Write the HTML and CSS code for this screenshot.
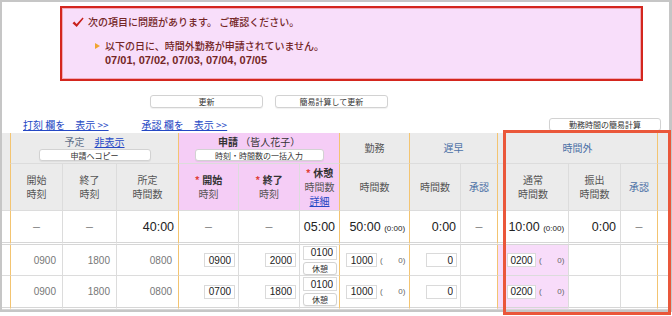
FILE: index.html
```html
<!DOCTYPE html>
<html lang="ja">
<head>
    <meta charset="UTF-8">
    <title>勤務表</title>
    <link rel="stylesheet" href="styles.css">
</head>
<body>
    <div class="frame">
        <div class="alert">
            <p class="alert-title">
                <svg class="check" width="12" height="11" viewBox="0 0 12 11"><path d="M0.5 6.2 L2.3 4.6 L4.6 6.9 L10.6 0.6 L11.6 1.6 L4.7 10 Z" fill="#c8201c"/></svg>
                次の項目に問題があります。 ご確認ください。
            </p>
            <div class="alert-item">
                <span class="tri"></span>
                <p>以下の日に、時間外勤務が申請されていません。<br><span class="dates">07/01, 07/02, 07/03, 07/04, 07/05</span></p>
            </div>
        </div>

        <div class="actions">
            <button class="btn">更新</button>
            <button class="btn">簡易計算して更新</button>
        </div>

        <div class="toolbar">
            <a href="#" class="toggle">打刻 欄を　表示 &gt;&gt;</a>
            <a href="#" class="toggle">承認 欄を　表示 &gt;&gt;</a>
            <button class="btn calc">勤務時間の簡易計算</button>
        </div>

        <table class="sheet">
            <colgroup>
                <col class="w-edge">
                <col class="w-52"><col class="w-54"><col class="w-62">
                <col class="w-60"><col class="w-61"><col class="w-40">
                <col class="w-70">
                <col class="w-51"><col class="w-37">
                <col class="w-71"><col class="w-52"><col class="w-37">
                <col class="w-rest">
            </colgroup>
            <tr class="head-top">
                <th rowspan="2" class="edge"></th>
                <th colspan="3" class="g-start grp">
                    <div class="grp-title"><span class="plan">予定</span>　<a href="#" class="link">非表示</a></div>
                    <button class="btn mini copy">申請へコピー</button>
                </th>
                <th colspan="3" class="g-start grp apply">
                    <div class="grp-title"><b>申請</b> （皆人花子）</div>
                    <button class="btn mini bulk">時刻・時間数の一括入力</button>
                </th>
                <th class="g-start">勤務</th>
                <th colspan="2" class="g-start blue">遅早</th>
                <th colspan="3" class="g-start blue">時間外</th>
                <th class="g-start"></th>
            </tr>
            <tr class="head-sub">
                <th class="g-start">開始<br>時刻</th>
                <th>終了<br>時刻</th>
                <th>所定<br>時間数</th>
                <th class="g-start apply"><b><span class="req">*</span> 開始</b><br>時刻</th>
                <th class="apply"><b><span class="req">*</span> 終了</b><br>時刻</th>
                <th class="apply"><b><span class="req">*</span> 休憩</b><br>時間数<br><a href="#" class="link">詳細</a></th>
                <th class="g-start">時間数</th>
                <th class="g-start">時間数</th>
                <th class="blue">承認</th>
                <th class="g-start">通常<br>時間数</th>
                <th>振出<br>時間数</th>
                <th class="blue">承認</th>
                <th class="g-start"></th>
            </tr>
            <tr class="sum">
                <td class="edge"></td>
                <td class="g-start dash">–</td>
                <td class="dash">–</td>
                <td class="num">40:00</td>
                <td class="g-start dash">–</td>
                <td class="dash">–</td>
                <td class="num">05:00</td>
                <td class="g-start num">50:00 <small>(0:00)</small></td>
                <td class="g-start num">0:00</td>
                <td class="dash">–</td>
                <td class="g-start num">10:00 <small>(0:00)</small></td>
                <td class="num">0:00</td>
                <td class="dash">–</td>
                <td class="g-start"></td>
            </tr>
            <tr class="day">
                <td class="edge"></td>
                <td class="g-start plain">0900</td>
                <td class="plain">1800</td>
                <td class="plain">0800</td>
                <td class="g-start field-cell"><input class="field" value="0900"></td>
                <td class="field-cell"><input class="field" value="2000"></td>
                <td class="rest-cell"><input class="field rest" value="0100"><button class="btn rest-btn">休憩</button></td>
                <td class="g-start work-cell"><input class="field" value="1000"><span class="paren">(<span class="pv">0</span>)</span></td>
                <td class="g-start field-cell"><input class="field" value="0"></td>
                <td></td>
                <td class="g-start pink work-cell"><input class="field short" value="0200"><span class="paren">(<span class="pv">0</span>)</span></td>
                <td></td>
                <td></td>
                <td class="g-start"></td>
            </tr>
            <tr class="day last">
                <td class="edge"></td>
                <td class="g-start plain">0900</td>
                <td class="plain">1800</td>
                <td class="plain">0800</td>
                <td class="g-start field-cell"><input class="field" value="0700"></td>
                <td class="field-cell"><input class="field" value="1800"></td>
                <td class="rest-cell"><input class="field rest" value="0100"><button class="btn rest-btn">休憩</button></td>
                <td class="g-start work-cell"><input class="field" value="1000"><span class="paren">(<span class="pv">0</span>)</span></td>
                <td class="g-start field-cell"><input class="field" value="0"></td>
                <td></td>
                <td class="g-start pink work-cell"><input class="field short" value="0200"><span class="paren">(<span class="pv">0</span>)</span></td>
                <td></td>
                <td></td>
                <td class="g-start"></td>
            </tr>
            <tr class="day">
                <td class="edge"></td>
                <td class="g-start"></td><td></td><td></td>
                <td class="g-start"></td><td></td><td></td>
                <td class="g-start"></td>
                <td class="g-start"></td><td></td>
                <td class="g-start pink"></td><td></td><td></td>
                <td class="g-start"></td>
            </tr>
        </table>
    </div>

    <div class="highlight"></div>
</body>
</html>
```

FILE: styles.css
```css
* {
    margin: 0;
    padding: 0;
    box-sizing: border-box;
}

body {
    position: relative;
    width: 672px;
    height: 316px;
    overflow: hidden;
    font-family: "Noto Sans CJK JP", "Liberation Sans", sans-serif;
    font-size: 10px;
    color: #444;
    background-color: #fff;
}

.frame {
    height: 312px;
    border: 2px solid #c6c6c6;
    border-right-width: 3px;
    overflow: hidden;
}

/* error message */
.alert {
    width: 583px;
    height: 75px;
    margin: 4px 0 0 58px;
    padding: 7px 0 0 10px;
    background-color: #f8defa;
    border: 2px solid #d4261e;
    box-shadow: inset 0 0 0 1px #f0aab8;
    color: #742626;
    font-weight: 500;
    line-height: 14px;
}

.alert-title {
    display: flex;
    align-items: center;
    gap: 4px;
}

.alert-item {
    display: flex;
    align-items: flex-start;
    margin: 10px 0 0 23px;
}

.tri {
    width: 0;
    height: 0;
    margin: 4px 5px 0 0;
    border-left: 5px solid #f0a431;
    border-top: 3px solid transparent;
    border-bottom: 3px solid transparent;
}

.dates {
    font-family: "Liberation Sans", sans-serif;
    font-size: 11px;
    font-weight: bold;
}

/* buttons */
.btn {
    height: 13px;
    background-color: #fff;
    border: 1px solid #d2d2d2;
    border-radius: 3px;
    box-shadow: 0 1px 1px rgba(0, 0, 0, 0.06);
    font-family: "Noto Sans CJK JP", sans-serif;
    font-size: 8px;
    line-height: 11px;
    color: #333;
}

.actions {
    display: flex;
    gap: 12px;
    margin: 14px 0 0 148px;
}

.actions .btn {
    width: 113px;
}

.toolbar {
    display: flex;
    align-items: flex-end;
    height: 25px;
    padding-left: 21px;
}

.toggle {
    margin-right: 33px;
    padding-bottom: 1px;
    line-height: 14px;
    color: #2548c4;
}

.calc {
    width: 112px;
    margin: 0 8px 2px auto;
}

/* time sheet */
.sheet {
    width: 675px;
    table-layout: fixed;
    border-collapse: separate;
    border-spacing: 0;
}

.w-edge { width: 8px; }
.w-37 { width: 37px; }
.w-40 { width: 40px; }
.w-51 { width: 51px; }
.w-52 { width: 52px; }
.w-54 { width: 54px; }
.w-60 { width: 60px; }
.w-61 { width: 61px; }
.w-62 { width: 62px; }
.w-70 { width: 70px; }
.w-71 { width: 71px; }
.w-rest { width: 20px; }

.sheet th,
.sheet td {
    border-left: 1px solid #dcdcdc;
    border-bottom: 1px solid #dcdcdc;
    padding: 0;
    overflow: hidden;
    white-space: nowrap;
}

.sheet th {
    background-color: #ebebeb;
    font-weight: normal;
    color: #555;
    line-height: 14px;
}

.sheet .edge {
    border-left: none;
}

.sheet .g-start {
    border-left-color: #f3c471;
}

.sheet .apply {
    background-color: #f5cdf6;
}

.blue {
    color: #4c70a6 !important;
}

.head-top th {
    height: 31px;
}

.head-top .grp {
    vertical-align: top;
    padding-top: 2px;
}

.grp-title {
    color: #333;
}

.plan {
    color: #5f7089;
}

.link {
    color: #2548c4;
}

.mini {
    display: block;
    height: 12px;
    margin: 0 auto;
}

.copy { width: 112px; }
.bulk { width: 129px; }

.head-sub th {
    height: 47px;
}

.head-sub b {
    color: #333;
}

.req {
    color: #e0403a;
}

.sheet td {
    height: 31px;
    font-family: "Liberation Sans", sans-serif;
}

.sum td {
    border-bottom: 3px double #d6d6d6;
    height: 34px;
    color: #222;
    font-size: 12.5px;
}

.sum .dash {
    text-align: center;
    color: #888;
}

.sum .num {
    text-align: right;
    padding-right: 4px;
}

.sum small {
    font-size: 8px;
}

.day.last td {
    border-bottom: 3px double #d6d6d6;
    height: 34px;
}

.plain {
    text-align: right;
    padding-right: 6px !important;
    color: #777;
}

.field-cell {
    text-align: right;
    padding-right: 3px !important;
}

.field {
    width: 31px;
    height: 14px;
    padding: 0 3px;
    border: 1px solid #dadada;
    font-family: "Liberation Sans", sans-serif;
    font-size: 10px;
    color: #222;
    text-align: right;
    vertical-align: middle;
}

.field.short {
    width: 29px;
    padding: 0 2px;
    text-align: center;
}

.rest-cell {
    padding: 0 2px 0 3px !important;
}

.field.rest,
.rest-btn {
    display: block;
    width: 34px;
}

.rest-btn {
    margin-top: 2px;
}

.work-cell {
    padding-left: 6px !important;
}

.work-cell.pink {
    padding-left: 9px !important;
}

.paren {
    margin-left: 3px;
    font-size: 8px;
    color: #666;
    vertical-align: middle;
}

.pv {
    display: inline-block;
    width: 20px;
    text-align: right;
}

.pink {
    background-color: #f8dcfa;
}

/* review highlight */
.highlight {
    position: absolute;
    left: 503px;
    top: 130px;
    width: 168px;
    height: 185px;
    border: 3px solid #ea573a;
}
```
